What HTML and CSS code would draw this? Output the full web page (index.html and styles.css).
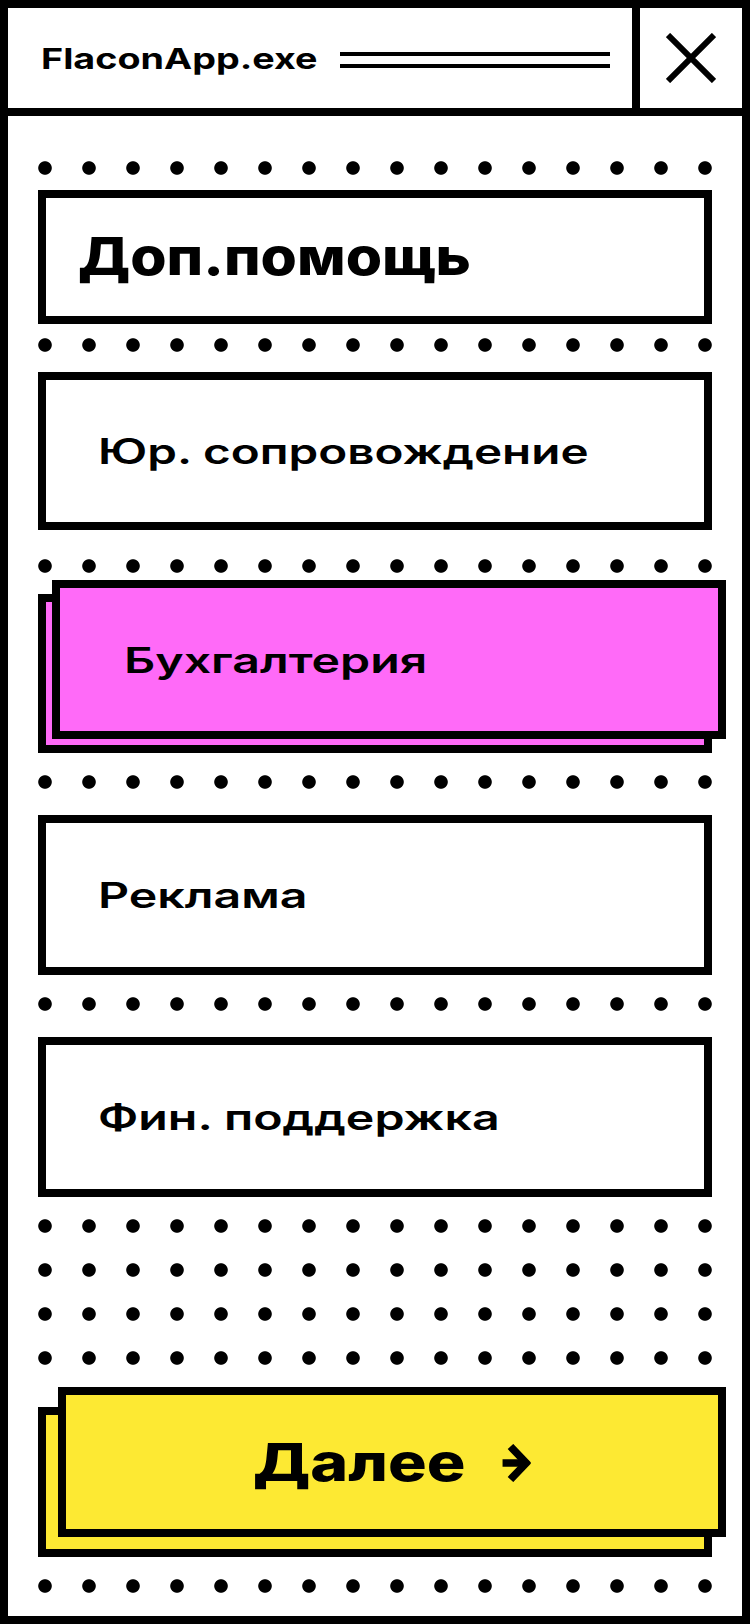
FILE: index.html
```html
<!DOCTYPE html>
<html lang="ru">
<head>
    <meta charset="UTF-8">
    <meta name="viewport" content="width=device-width, initial-scale=1.0">
    <title>FlaconApp.exe</title>
    <link rel="stylesheet" href="styles.css">
</head>
<body>
    <div class="window">
        <div class="titlebar">
            <div class="title">
                <span class="title-text">FlaconApp.exe</span>
                <span class="title-lines"></span>
            </div>
            <button class="close" aria-label="Закрыть">
                <svg width="50" height="50" viewBox="0 0 50 50">
                    <path d="M2 2 L48 48 M48 2 L2 48" stroke="#000" stroke-width="6" fill="none"/>
                </svg>
            </button>
        </div>

        <div class="content">
            <div class="dots first"></div>
            <div class="box box-head"><h1 class="wide">Доп.помощь</h1></div>

            <div class="dots after-head"></div>
            <div class="box legal"><span class="label wide">Юр. сопровождение</span></div>

            <div class="dots after-legal"></div>
            <div class="stack stack-pink">
                <div class="back"></div>
                <div class="front"><span class="label wide">Бухгалтерия</span></div>
            </div>

            <div class="dots"></div>
            <div class="box"><span class="label wide">Реклама</span></div>

            <div class="dots"></div>
            <div class="box"><span class="label wide">Фин. поддержка</span></div>

            <div class="dots dots-block"></div>
            <div class="stack stack-cta">
                <div class="back"></div>
                <button class="front">
                    <span class="cta-label">
                        <span>Далее</span>
                        <svg class="arrow" width="23" height="38" viewBox="0 0 28 38" preserveAspectRatio="none">
                            <path d="M0 19 H23" stroke="#000" stroke-width="7.5" fill="none"/>
                            <path d="M8 2.5 L23.5 19 L8 35.5" stroke="#000" stroke-width="7.5" fill="none"/>
                        </svg>
                    </span>
                </button>
            </div>

            <div class="dots"></div>
        </div>
    </div>
</body>
</html>
```

FILE: styles.css
```css
* { box-sizing: border-box; }
body { margin: 0; background: #fff; color: #000; font-family: Inter, "Noto Sans", sans-serif; }

.window { width: 750px; height: 1624px; border: 8px solid #000; display: flex; flex-direction: column; }

/* title bar */
.titlebar { height: 108px; border-bottom: 8px solid #000; display: flex; flex-shrink: 0; }
.title { flex: 1; display: flex; align-items: center; padding: 0 22px 0 33px; }
.title-text { display: inline-block; font-size: 29px; font-weight: 700; white-space: nowrap; transform: scaleX(1.3); transform-origin: left center; }
.title-lines { margin-left: auto; margin-top: 3px; width: 270px; height: 16px; border-top: 4px solid #000; border-bottom: 4px solid #000; }
.close { width: 110px; padding: 0; border: 0; border-left: 8px solid #000; background: none; display: flex; align-items: center; justify-content: center; cursor: pointer; }

/* menu */
.content { flex: 1; padding: 0 30px; display: flex; flex-direction: column; }

.dots { flex-shrink: 0; height: 14px; margin-top: 22px; background: radial-gradient(circle at 7px 7px, #000 6.3px, transparent 7.2px) 0 0 / 44px 44px; }
.dots.first { margin-top: 45px; }
.dots.after-head { margin-top: 14px; }
.dots.after-legal { margin-top: 29px; }
.dots-block { height: 146px; }

.box { flex-shrink: 0; height: 160px; margin-top: 26px; padding-left: 52px; border: 8px solid #000; background: #fff; display: flex; align-items: center; }
.box-head { height: 134px; margin-top: 15px; padding-left: 32px; }
.box.legal { height: 158px; margin-top: 20px; }

h1 { margin: 0; font-size: 52px; font-weight: 800; line-height: 1; }
.wide { display: inline-block; white-space: nowrap; transform: scaleX(1.13); transform-origin: left center; }
.label { font-size: 35px; font-weight: 600; transform: scaleX(1.38); }
.legal .label { transform: scaleX(1.36); }

/* offset cards */
.stack { position: relative; flex-shrink: 0; }
.stack .back { border: 8px solid #000; }
.stack .front { position: absolute; top: 0; border: 8px solid #000; display: flex; align-items: center; }

.stack-pink { margin-top: 7px; padding-top: 14px; }
.stack-pink .back { height: 159px; background: #ff6af8; }
.stack-pink .front { left: 14px; width: 100%; height: 159px; padding-left: 64px; background: #ff6af8; }

.stack-cta { margin-top: 22px; padding-top: 20px; }
.stack-cta .back { height: 150px; background: #fde933; }
.stack-cta .front { left: 20px; width: 668px; height: 150px; padding: 0; justify-content: center; background: #fde933; font-family: inherit; color: #000; cursor: pointer; }
.cta-label { display: inline-flex; align-items: center; font-size: 52px; font-weight: 800; transform: scaleX(1.24); }
.arrow { margin-left: 30px; margin-top: 2px; }
```
